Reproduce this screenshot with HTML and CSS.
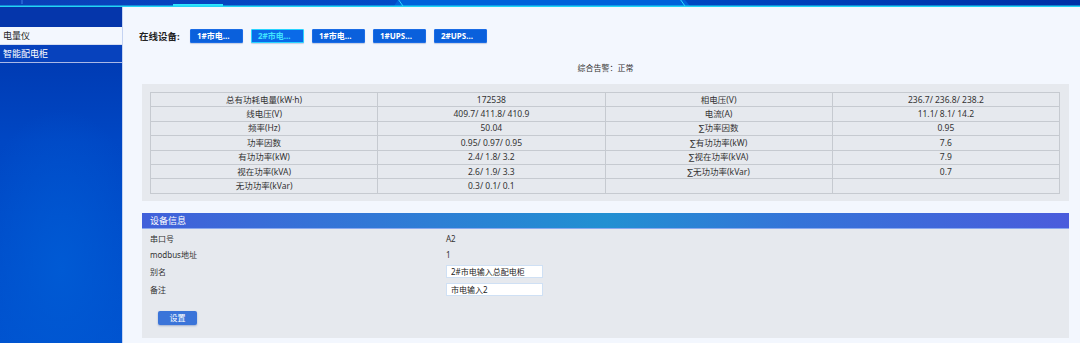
FILE: index.html
```html
<!DOCTYPE html>
<html lang="zh-CN">
<head>
  <meta charset="UTF-8" />
  <meta name="viewport" content="width=device-width, initial-scale=1.0"/>
  <title>电量仪</title>
  <link rel="stylesheet" href="styles.css">
</head>
<body>
  <header class="topbar">
    <svg class="topbar-art" viewBox="0 0 1080 7" preserveAspectRatio="none">
      <defs>
        <linearGradient id="tb" x1="0" x2="1" y1="0" y2="0">
          <stop offset="0" stop-color="#0a3fb8"/>
          <stop offset="0.5" stop-color="#0050cc"/>
          <stop offset="1" stop-color="#0030a6"/>
        </linearGradient>
      </defs>
      <rect x="0" y="0" width="1080" height="7" fill="url(#tb)"/>
      <line x1="22" y1="0" x2="22" y2="4" stroke="#3b7ee8" stroke-width="1"/>
      <polygon points="398,0 685,0 690,6 394,6" fill="#0062da"/>
      <polyline points="398,-1 403,6" stroke="#2ad8ff" stroke-width="1" fill="none"/>
      <polyline points="680,-1 685,6" stroke="#2ad8ff" stroke-width="1" fill="none"/>
      <rect x="173" y="4" width="50" height="2" fill="#30e8ff"/>
      <rect x="0" y="5.5" width="1080" height="1.5" fill="#22d6f5"/>
    </svg>
  </header>

  <div class="layout">
    <aside class="sidebar">
      <div class="sidebar-top"></div>
      <a class="menu-item active">电量仪</a>
      <a class="menu-item">智能配电柜</a>
    </aside>

    <main class="main">
      <div class="devices">
        <span class="devices-label">在线设备:</span>
        <button class="dev-btn">1#市电...</button>
        <button class="dev-btn current">2#市电...</button>
        <button class="dev-btn">1#市电...</button>
        <button class="dev-btn">1#UPS...</button>
        <button class="dev-btn">2#UPS...</button>
      </div>

      <div class="content">
        <p class="alarm">综合告警：正常</p>

        <div class="panel data-panel">
          <table class="data-table">
            <tr><td>总有功耗电量(kW·h)</td><td>172538</td><td>相电压(V)</td><td>236.7/ 236.8/ 238.2</td></tr>
            <tr><td>线电压(V)</td><td>409.7/ 411.8/ 410.9</td><td>电流(A)</td><td>11.1/ 8.1/ 14.2</td></tr>
            <tr><td>频率(Hz)</td><td>50.04</td><td>∑功率因数</td><td>0.95</td></tr>
            <tr><td>功率因数</td><td>0.95/ 0.97/ 0.95</td><td>∑有功功率(kW)</td><td>7.6</td></tr>
            <tr><td>有功功率(kW)</td><td>2.4/ 1.8/ 3.2</td><td>∑视在功率(kVA)</td><td>7.9</td></tr>
            <tr><td>视在功率(kVA)</td><td>2.6/ 1.9/ 3.3</td><td>∑无功功率(kVar)</td><td>0.7</td></tr>
            <tr><td>无功功率(kVar)</td><td>0.3/ 0.1/ 0.1</td><td></td><td></td></tr>
          </table>
        </div>

        <div class="panel info-panel">
          <div class="info-head">设备信息</div>
          <div class="info-body">
            <div class="info-row"><span class="info-label">串口号</span><span>A2</span></div>
            <div class="info-row"><span class="info-label">modbus地址</span><span>1</span></div>
            <div class="info-row tall"><span class="info-label">别名</span><input class="info-input" type="text" value="2#市电输入总配电柜"></div>
            <div class="info-row tall"><span class="info-label">备注</span><input class="info-input" type="text" value="市电输入2"></div>
            <button class="set-btn">设置</button>
          </div>
        </div>
      </div>
    </main>
  </div>
</body>
</html>
```

FILE: styles.css
```css
* {
  margin: 0;
  padding: 0;
  box-sizing: border-box;
  font-family: "Noto Sans", "DejaVu Sans", "Noto Sans CJK SC", sans-serif;
}

html, body {
  height: 100%;
  overflow: hidden;
}

body {
  background: #f3f7fe;
  display: flex;
  flex-direction: column;
}

.topbar {
  height: 7px;
  flex-shrink: 0;
}

.topbar-art {
  display: block;
  width: 100%;
  height: 7px;
}

.layout {
  flex: 1;
  display: flex;
}

.sidebar {
  width: 123px;
  flex-shrink: 0;
  background: radial-gradient(ellipse 90px 160px at 50% 78%, #005ad4, transparent),
              linear-gradient(180deg, #0033a8 0%, #0047c4 40%, #0052cf 100%);
  border-right: 1px solid #c4d3f2;
  display: flex;
  flex-direction: column;
}

.sidebar-top {
  height: 20px;
  background: #0536ab;
}

.menu-item {
  display: block;
  height: 18px;
  line-height: 17px;
  padding-left: 3px;
  font-size: 9px;
  color: #fff;
  border-bottom: 1px solid #aab8e6;
  background: #0742bd;
}

.menu-item.active {
  background: #f3f7fe;
  color: #222;
  border-bottom-color: #d6def0;
}

.main {
  flex: 1;
  padding: 22px 11px 0 16px;
}

.devices {
  display: flex;
  align-items: center;
  height: 14px;
  gap: 8px;
}

.devices-label {
  font-size: 9.5px;
  font-weight: bold;
  color: #222;
  width: 43px;
}

.dev-btn {
  width: 53px;
  height: 14px;
  border: 1px solid #1a6ce6;
  border-radius: 1px;
  background: #0a60dc;
  color: #fff;
  font-size: 8px;
  font-weight: bold;
  line-height: 12px;
  text-align: left;
  padding-left: 6px;
  box-shadow: 0 1px 1px rgba(0, 40, 120, 0.2);
}

.dev-btn.current {
  border-color: #28d4ff;
  background: #0a6ae8;
  color: #3fe3ff;
}

.content {
  padding-left: 3px;
}

.alarm {
  text-align: center;
  font-size: 8px;
  color: #333;
  margin-top: 20px;
  height: 10px;
  line-height: 10px;
}

.panel {
  background: #e6e9ee;
}

.data-panel {
  margin-top: 11px;
  padding: 8px 9px 7px 8px;
}

.data-table {
  width: 100%;
  border-collapse: collapse;
  table-layout: fixed;
}

.data-table td {
  border: 1px solid #c6cad0;
  height: 14.4px;
  padding: 0;
  font-size: 8.5px;
  line-height: 12px;
  color: #333;
  text-align: center;
}

.info-panel {
  margin-top: 12px;
}

.info-head {
  height: 16px;
  line-height: 16px;
  padding-left: 8px;
  font-size: 9px;
  color: #fff;
  background: linear-gradient(90deg, #4160da 0%, #2290d2 50%, #3474d8 70%, #4a5cdc 100%);
  border-bottom: 1px solid #8aa8ee;
}

.info-body {
  padding: 2px 8px 13px 8px;
}

.info-row {
  display: flex;
  align-items: center;
  height: 16px;
  font-size: 8px;
  color: #333;
}

.info-row.tall {
  height: 18px;
}

.info-label {
  width: 296px;
}

.info-input {
  width: 97px;
  height: 13px;
  border: 1px solid #cfe0f4;
  background: #fff;
  font-size: 8px;
  color: #222;
  padding-left: 4px;
  outline: none;
}

.set-btn {
  display: block;
  margin: 12px 0 0 8px;
  width: 39px;
  height: 14px;
  border: none;
  border-radius: 2px;
  background: #3a74d9;
  color: #fff;
  font-size: 8px;
  box-shadow: 0 1px 2px rgba(30, 70, 150, 0.35);
}
```
